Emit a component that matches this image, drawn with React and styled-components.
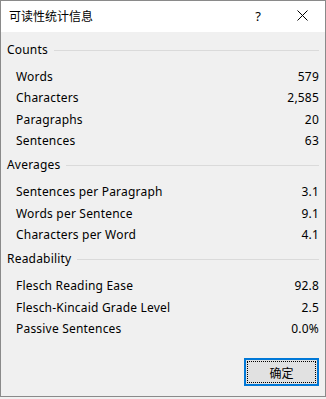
import React from "react";
import styled, { createGlobalStyle } from "styled-components";

const GlobalStyle = createGlobalStyle`
  html, body {
    margin: 0;
    padding: 0;
    background: #f0f0f0;
  }
  body {
    font-family: "Segoe UI", "Noto Sans", "Noto Sans CJK SC", sans-serif;
    font-size: 12px;
    color: #000;
  }
`;

const sections = [
  {
    title: "Counts",
    rows: [
      ["Words", "579"],
      ["Characters", "2,585"],
      ["Paragraphs", "20"],
      ["Sentences", "63"],
    ],
  },
  {
    title: "Averages",
    rows: [
      ["Sentences per Paragraph", "3.1"],
      ["Words per Sentence", "9.1"],
      ["Characters per Word", "4.1"],
    ],
  },
  {
    title: "Readability",
    rows: [
      ["Flesch Reading Ease", "92.8"],
      ["Flesch-Kincaid Grade Level", "2.5"],
      ["Passive Sentences", "0.0%"],
    ],
  },
];

const Dialog = () => {
  return (
    <Window>
      <TitleBar>
        <Title>可读性统计信息</Title>
        <TitleButton>?</TitleButton>
        <CloseButton>
          <svg width="11" height="11" viewBox="0 0 11 11">
            <path d="M0.5 0.5 L10.5 10.5 M10.5 0.5 L0.5 10.5" stroke="#000" strokeWidth="1" />
          </svg>
        </CloseButton>
      </TitleBar>
      <Body>
        {sections.map((section) => (
          <Section key={section.title}>
            <GroupHeader>
              <span>{section.title}</span>
              <Rule />
            </GroupHeader>
            {section.rows.map(([label, value]) => (
              <Row key={label}>
                <span>{label}</span>
                <span>{value}</span>
              </Row>
            ))}
          </Section>
        ))}
        <Footer>
          <OkButton>
            <Focus>确定</Focus>
          </OkButton>
        </Footer>
      </Body>
    </Window>
  );
};

const Window = styled.div`
  width: 326px;
  height: 397px;
  box-sizing: border-box;
  border: 1px solid #8a8a8a;
  background: #f0f0f0;
  display: flex;
  flex-direction: column;
`;

const TitleBar = styled.div`
  height: 31px;
  background: #fff;
  display: flex;
  align-items: center;
  padding-left: 8px;
`;

const Title = styled.div`
  flex: 1;
  font-family: "Noto Sans CJK SC", sans-serif;
  font-size: 12px;
  margin-top: -2px;
`;

const TitleButton = styled.div`
  width: 46px;
  box-sizing: border-box;
  padding-left: 4px;
  text-align: center;
  font-size: 13px;
  margin-top: -2px;
`;

const CloseButton = styled.div`
  width: 46px;
  height: 31px;
  display: flex;
  align-items: center;
  justify-content: center;
  svg {
    margin-top: -3px;
  }
`;

const Body = styled.div`
  flex: 1;
  display: flex;
  flex-direction: column;
  padding: 7px 6px 0 6px;
  letter-spacing: 0.2px;
`;

const Section = styled.div`
  display: flex;
  flex-direction: column;
  margin-bottom: 3px;
`;

const GroupHeader = styled.div`
  display: flex;
  align-items: center;
  height: 21px;
  margin-bottom: 6px;
  span {
    margin-right: 6px;
  }
`;

const Rule = styled.div`
  flex: 1;
  height: 1px;
  background: #dadada;
  margin-top: 1px;
`;

const Row = styled.div`
  display: flex;
  justify-content: space-between;
  align-items: center;
  height: 21.3px;
  padding-left: 9px;
`;

const Footer = styled.div`
  display: flex;
  justify-content: flex-end;
  margin-top: auto;
  padding-bottom: 10px;
  letter-spacing: 0;
`;

const OkButton = styled.div`
  width: 75px;
  height: 28px;
  box-sizing: border-box;
  border: 2px solid #0078d7;
  background: #e1e1e1;
  padding: 1px;
  display: flex;
`;

const Focus = styled.div`
  flex: 1;
  border: 1px dotted #000;
  display: flex;
  align-items: center;
  justify-content: center;
  font-family: "Noto Sans CJK SC", sans-serif;
  font-size: 12px;
`;

export default function App() {
  return (
    <>
      <GlobalStyle />
      <Dialog />
    </>
  );
}
